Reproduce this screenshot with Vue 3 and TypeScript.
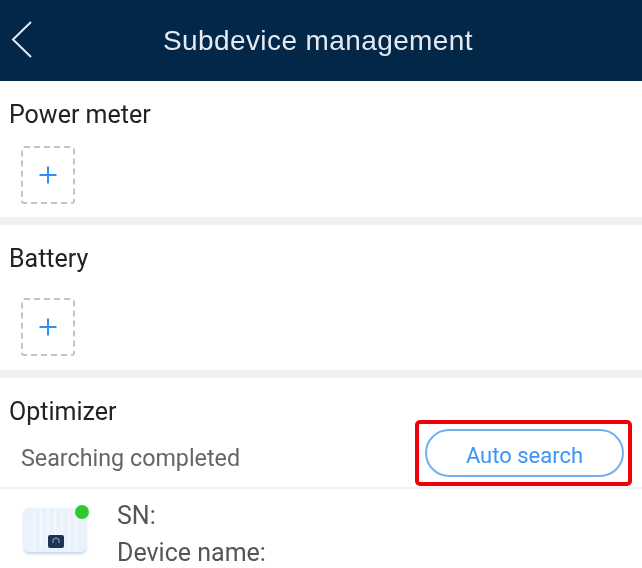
<script setup lang="ts">
const sections: string[] = ['Power meter', 'Battery']
</script>

<template>
  <div class="page">
    <header class="bar">
      <button class="back" aria-label="Back">
        <svg width="24" height="40" viewBox="0 0 24 40"><path d="M21 2 L3 19.5 L21 37" fill="none" stroke="#e6ecf2" stroke-width="2"/></svg>
      </button>
      <h1>Subdevice management</h1>
    </header>
    <section v-for="s in sections" :key="s" class="group">
      <h2>{{ s }}</h2>
      <button class="add" :aria-label="'Add ' + s">
        <svg width="18" height="18" viewBox="0 0 18 18"><path d="M9 0.5V17.5M0.5 9H17.5" stroke="#2f8ff0" stroke-width="2"/></svg>
      </button>
    </section>
    <section class="opt">
      <h2>Optimizer</h2>
      <div class="status">
        <span class="state">Searching completed</span>
        <div class="mark"><button class="auto">Auto search</button></div>
      </div>
    </section>
    <div class="device">
      <div class="thumb">
        <svg width="68" height="58" viewBox="0 0 68 58">
          <defs><filter id="s" x="-20%" y="-20%" width="140%" height="140%"><feGaussianBlur stdDeviation="1.5"/></filter></defs>
          <rect x="2" y="9" width="62" height="44" rx="5" fill="#c5d3e8" filter="url(#s)"/>
          <rect x="2" y="7" width="62" height="44" rx="5" fill="#eaf2fc"/>
          <path d="M12 8V49M19 8V49M26 8V49M33 8V49M40 8V49M47 8V49M54 8V49" stroke="#f3f8fe" stroke-width="2.5"/>
          <rect x="26" y="34" width="16" height="13" rx="2" fill="#1c3553"/>
          <path d="M31 42V38.5L34 37L37 38.5V42" fill="none" stroke="#9fb4cc" stroke-width="1"/>
          <circle cx="60" cy="11" r="7" fill="#2fc82f"/>
        </svg>
      </div>
      <div class="info">
        <div>SN:</div>
        <div>Device name:</div>
      </div>
    </div>
  </div>
</template>

<style scoped>
.page { width: 642px; height: 568px; overflow: hidden; background: #fff; font-family: Roboto, "Liberation Sans", sans-serif; color: #222; filter: blur(0.7px); }
.bar { height: 81px; background: #032749; display: flex; align-items: center; justify-content: center; position: relative; }
.bar h1 { margin: 0 6px 0 0; font-size: 28px; font-weight: 400; color: #e4eaf0; letter-spacing: 0.4px; font-family: "Liberation Sans", sans-serif; }
.back { position: absolute; left: 10px; top: 20px; padding: 0; border: 0; background: none; display: flex; }
.group { height: 144px; box-sizing: border-box; border-bottom: 8px solid #eff1f1; padding: 20px 9px 0; }
.group + .group { height: 153px; }
h2 { margin: 0; font-size: 25px; line-height: 28px; font-weight: 400; }
.add { margin: 17px 0 0 12px; width: 54px; height: 58px; box-sizing: border-box; border: 2px dashed #c4c4c4; border-radius: 3px; background: #fff; padding: 0; display: flex; align-items: center; justify-content: center; }
.group + .group .add { margin-top: 25px; }
.opt { height: 111px; box-sizing: border-box; border-bottom: 2px solid #f0f1f1; padding: 20px 10px 0 9px; }
.status { display: flex; align-items: flex-start; justify-content: space-between; padding-left: 12px; margin-top: -6px; color: #666; }
.state { font-size: 23.3px; line-height: 28px; margin-top: 24px; }
.mark { border: 4px solid #f00008; border-radius: 5px; padding: 5px 4px 5px 6px; }
.auto { display: block; width: 199px; height: 48px; border: 2px solid #6fb0f5; border-radius: 24px; background: #fff; color: #3d94f2; font: 400 22px Roboto, "Liberation Sans", sans-serif; padding: 5px 0 0; }
.device { display: flex; padding: 8px 0 0 22px; }
.thumb { width: 68px; height: 58px; margin-top: 4px; }
.info { margin-left: 27px; font-size: 25px; line-height: 37px; color: #555; }
</style>
